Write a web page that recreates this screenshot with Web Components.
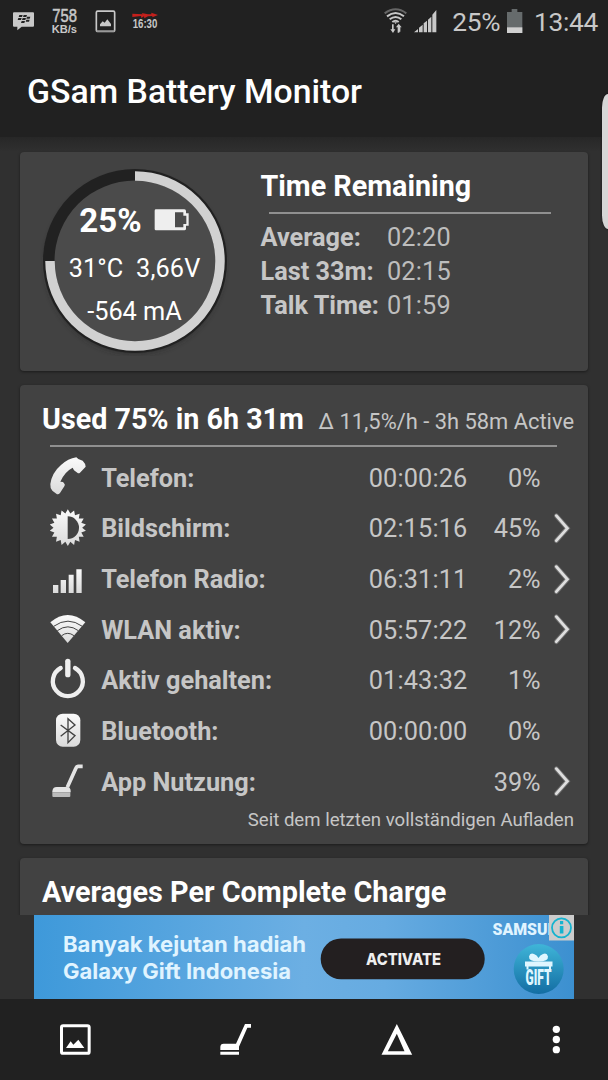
<!DOCTYPE html>
<html lang="de">
<head>
<meta charset="utf-8">
<title>GSam Battery Monitor</title>
<style>
html, body { margin: 0; height: 100%; }
body {
    background: #303030;
    color: #c6c6c6;
    font-family: Roboto, "Liberation Sans", sans-serif;
    overflow: hidden;
}
</style>
</head>
<body>
<battery-app></battery-app>

<script>
function define(name, html, setup) {
    const template = document.createElement('template');
    template.innerHTML = html;
    customElements.define(name, class extends HTMLElement {
        constructor() {
            super();
            this.attachShadow({mode: 'open'}).appendChild(template.content.cloneNode(true));
        }
        connectedCallback() {
            if (setup) setup(this, this.shadowRoot);
        }
    });
}

// name: [viewBox, markup]. All icons are drawn at 3 units per pixel.
const LIGHT = 'fill="#c8c8c8"';
const ICONS = {
    bbm: ['39 0 63 132', `<path ${LIGHT} d="M42 37h57q3 0 3 3v37q0 3-3 3H65L52 91V80H42q-3 0-3-3V40q0-3 3-3z"/>
        <path fill="#222" d="M58 45h10l-2 6H56zM71 45h10l-2 6H69zM55 54h10l-2 6H53zM68 54h10l-2 6H66zM81 50h10l-2 6H79zM65 63h10l-2 6H63zM79 59h10l-2 6H77z"/>`],
    speed: ['150 0 81 132', `<g ${LIGHT} font-family="Liberation Sans">
        <text x="154" y="67" font-size="53" textLength="74" lengthAdjust="spacingAndGlyphs" stroke="#c8c8c8" stroke-width="1.5">758</text>
        <text x="152" y="100" font-size="31" font-weight="bold" textLength="76" lengthAdjust="spacingAndGlyphs">KB/s</text></g>`],
    shot: ['281 0 60 132', `<rect x="285" y="33.500" width="55" height="61" rx="4" fill="none" stroke="#c8c8c8" stroke-width="5"/>
        <path fill="#c8c8c8" d="M296 79V73l8-9 6 4 8-10 11 14v7z"/><path fill="#999" d="M285 91h55v5h-55z"/>`],
    clock: ['395 0 82 132', `<path fill="#c4201c" d="M396 41l31 2 -3-4 19 4 10 0v-5l20 7-17 7v-4l-13 1-11 6-1-6-8 5-1-6-26 3z"/>
        <text x="397" y="83" ${LIGHT} font-family="Liberation Sans" font-size="40" font-weight="bold" textLength="74" lengthAdjust="spacingAndGlyphs">16:30</text>`],
    wifiUp: ['242 0 69 132', `<g fill="none" stroke="#c8c8c8" stroke-width="6"><path stroke="#666" d="M244 40q33-24 65 0"/>
        <path d="M251 49q26-20 51 0M259 58q18-14 35 0M267 66q10-8 19 0"/></g>
        <path ${LIGHT} d="M272 67h9l-4 5zM266 73h5v15h5l-7 11-8-11h5zM288 98h-5V82h-5l8-11 9 11h-4v13h-3z"/>`],
    signal: ['332 0 69 132', `<path ${LIGHT} d="M332 97l12-10v10zM347 97V83l11-9v23zM361 97V70l10-8v35zM374 97V59l10-9v47zM387 97V44l12-14v67z"/>`],
    battery: ['608 0 47 132', `<path fill="#666b6c" d="M608 36h14v-9h17v9h15v63h-46z"/><path fill="#d0d0d0" d="M608 82h46v17h-46z"/>`],
    charge: ['400 170 105 75', `<path fill="#eee" fill-rule="evenodd" d="M406 177h85q5 0 5 5v7h8v37h-8v9q0 5-5 5h-85q-4 0-4-4v-55q0-4 4-4zM463 186v45h25V221h9v-25h-9v-10z"/>`],
    phone: ['86 222 114 114', `<path fill="url(#g)" d="M174 222l13 5q9 9 9 18L179 263q-4 3-8 0l-10-7-4-8q-24 12-37 42l8 1 3 4q5 5 1 9l-13 20q-6 7-11 2l-12-9q-7-7-6-20 5-34 32-57 21-19 46-23z"/>`],
    screen: ['86 374 114 114', `<path fill="url(#g)" id="sun"/><path fill="#424242" d="M142 393a34 34 0 0 1 0 68z"/>`],
    radio: ['86 526 114 114', `<path fill="url(#g)" d="M98 598h16v24H98zM121 583h16v39H121zM145 567h15v55H145zM168 551h16v71H168z"/>`],
    wifi: ['86 33 114 114', `<path fill="url(#g)" d="M90 67q52-44 105 0l-53 62z"/>
        <path fill="none" stroke="#424242" stroke-width="3" d="M100 79q43-31 86 0M111 92q32-23 63 0M124 107q18-14 37 0"/>`],
    power: ['86 172 114 140', `<g fill="none" stroke="#eee" stroke-linecap="round" stroke-width="13"><path d="M121 202a45 45 0 1 0 43 0"/><path stroke-width="16" d="M142.500 182v40"/></g>`],
    bluetooth: ['86 337 114 114', `<rect x="107" y="339" width="73" height="99" rx="20" fill="url(#g)"/>
        <path fill="none" stroke="#424242" stroke-width="4" d="M121 373l43 32-21 21v-72l21 19-43 34"/>`],
    broom: ['86 489 114 114', `<path fill="none" stroke="#e4e4e4" stroke-width="11" stroke-linejoin="round" d="M187 499h-14q-4 0-6 5L141 562"/>
        <path fill="#e4e4e4" d="M96 574q1-13 13-13h30q12 0 12 12v4H96z"/><path fill="#bbb" d="M96 577h54v12q0 2-3 2H99q-3 0-3-3z"/>`],
    chevron: ['760 374 54 114', `<path fill="none" stroke="#909090" stroke-width="14" stroke-linecap="round" opacity=".6" d="M770 391l33 38-33 37"/><path fill="none" stroke="#dedede" stroke-width="8.500" stroke-linecap="round" d="M770 391l33 38-33 37"/>`],
    image: ['180 522 93 93', `<rect x="184.500" y="527" width="83" height="83" rx="5" fill="none" stroke="#fff" stroke-width="9"/><path fill="#fff" d="M198 594l14-20 8 10 15-15 18 25z"/>`],
    clean: ['661 522 93 93', `<path fill="#fff" d="M736 522h18v11h-11L718 590v10h-56v-9q0-10 10-10h37zM662 605h56v9h-56z"/>`],
    delta: ['243 522 93 93', `<path fill="#fff" fill-rule="evenodd" d="M290.500 522l46 92h-92zM290.500 551l-27 53h50z"/>`],
    more: ['723 522 93 93', `<g fill="#fff"><circle cx="769" cy="538" r="11"/><circle cx="769" cy="568.500" r="11"/><circle cx="769" cy="599" r="11"/></g>`],
};

// Outline of the sun: 18 teeth around (142.5, 427)
function sunPath() {
    const points = [];
    for (let i = 0; i < 36; i++) {
        const r = i % 2 ? 43 : 55;
        const a = Math.PI * i / 18 - Math.PI / 2;
        points.push((142.5 + r * Math.cos(a)).toFixed(1) + ' ' + (427 + r * Math.sin(a)).toFixed(1));
    }
    return 'M' + points.join('L') + 'z';
}

define('app-icon', `<style>
:host { display: block; flex: none; }
svg { display: block; overflow: visible; }
</style><span></span>`, (el, root) => {
    const [box, body] = ICONS[el.getAttribute('name')];
    const [, , w, h] = box.split(' ');
    root.querySelector('span').innerHTML = `<svg width="${w / 3}" height="${h / 3}" viewBox="${box}">
        <linearGradient id="g" x2="0" y2="1"><stop stop-color="#fafafa"/><stop offset="1" stop-color="#dadada"/></linearGradient>${body}</svg>`;
    const sun = root.querySelector('#sun');
    if (sun) sun.setAttribute('d', sunPath());
});

define('status-bar', `<style>
:host { display: flex; height: 44px; padding: 0 10px 0 13px; color: #c8c8c8; font-size: 26.3px; line-height: 45px; }
.left, .right { display: flex; }
.right { margin-left: auto; }
.left { gap: 17px; }
.signal { margin-left: 7px; }
.pct { width: 54px; margin-left: 15px; margin-right: 1px; letter-spacing: -.3px; }
.time { width: 64px; margin-left: 11px; text-align: right; letter-spacing: -.3px; }
</style>
<div class="left">
    <app-icon name="bbm"></app-icon><app-icon name="speed"></app-icon>
    <app-icon name="shot"></app-icon><app-icon name="clock"></app-icon>
</div>
<div class="right">
    <app-icon name="wifiUp"></app-icon><app-icon class="signal" name="signal"></app-icon>
    <span class="pct">25%</span><app-icon class="battery" name="battery"></app-icon><span class="time">13:44</span>
</div>`);

define('title-bar', `<style>
:host { display: block; height: 93px; padding-left: 27px; color: #fff; font-size: 33.8px; font-weight: 500; line-height: 96px; }
</style><slot></slot>`);

define('info-card', `<style>
:host { display: block; box-sizing: border-box; background: #424242; border-radius: 4px; box-shadow: 0 1px 3px rgba(0, 0, 0, .45); }
</style><slot></slot>`);

define('battery-gauge', `<style>
:host { display: grid; width: 190px; height: 190px; color: #fff; font-size: 25.3px; }
svg, .text { grid-area: 1 / 1; }
.text { display: flex; flex-direction: column; align-items: center; padding: 30px 1px 0 0; white-space: pre; }
.text div { height: 43px; line-height: 43px; }
.text .level { display: flex; align-items: center; gap: 12px; height: 50px; margin-right: 1px; font-size: 33px; font-weight: bold; line-height: 50px; }
.level app-icon { margin-top: -3px; }
.text .temp { margin-top: 1px; letter-spacing: .1px; }
</style>
<svg width="190" height="190" viewBox="-95 -95 190 190">
    <defs><filter id="s" x="-20%" y="-20%" width="140%" height="140%"><feGaussianBlur stdDeviation="2.500"/></filter></defs>
    <circle r="90" cy="3" fill="#222" opacity=".5" filter="url(#s)"/>
    <circle r="92" fill="#212121"/>
    <circle r="80.500" fill="#4b4b4b"/>
    <path d="M0-85A85 85 0 1 1-85 0" fill="none" stroke="#d1d1d1" stroke-width="9.500"/>
</svg>
<div class="text">
    <div class="level"><span>25%</span><app-icon name="charge"></app-icon></div>
    <div class="temp">31°C  3,66V</div>
    <div>-564 mA</div>
</div>`);

define('time-remaining', `<style>
:host { display: block; font-size: 25.3px; }
h2 { margin: 0; color: #fff; font-size: 28.7px; line-height: 36px; }
hr { width: 282px; height: 2px; margin: 8px 0 7px 8px; border: 0; background: #909090; }
dl { display: grid; grid-template-columns: 126.500px 1fr; margin: 0; line-height: 34px; white-space: nowrap; }
dt { font-weight: bold; }
dd { margin: 0; color: #bdbdbd; letter-spacing: .15px; }
</style>
<h2>Time Remaining</h2>
<hr>
<dl>
    <dt>Average:</dt><dd>02:20</dd>
    <dt>Last 33m:</dt><dd>02:15</dd>
    <dt>Talk Time:</dt><dd>01:59</dd>
</dl>`);

define('usage-row', `<style>
:host { display: flex; align-items: center; height: 50.67px; padding-left: 28.670px; font-size: 25.3px; white-space: nowrap; }
.label { margin-left: 14.500px; width: 267.500px; font-weight: bold; }
.time { width: 100px; letter-spacing: .15px; }
.pct { width: 72px; text-align: right; }
.more { margin-left: 12px; }
</style>
<span class="icon"></span>
<span class="label"><slot></slot></span>
<span class="time"></span>
<span class="pct"></span>`, (el, root) => {
    root.querySelector('.icon').innerHTML = `<app-icon name="${el.getAttribute('icon')}"></app-icon>`;
    root.querySelector('.time').textContent = el.getAttribute('time') || '';
    root.querySelector('.pct').textContent = el.getAttribute('pct');
    if (el.hasAttribute('more')) {
        root.querySelector('.pct').insertAdjacentHTML('afterend', '<app-icon class="more" name="chevron"></app-icon>');
    }
});

define('usage-list', `<style>
:host { display: block; }
header { display: flex; align-items: baseline; justify-content: space-between; height: 60px; padding: 0 14px 0 22px; line-height: 69px; white-space: nowrap; }
h2 { margin: 0; color: #fff; font-size: 28.7px; }
.rate { font-size: 21.9px; }
hr { width: 507px; height: 2px; margin: 0 0 6px 30px; border: 0; background: #909090; }
footer { padding-right: 14px; text-align: right; font-size: 18.6px; line-height: 24px; }
</style>
<header><h2>Used 75% in 6h 31m</h2><span class="rate">Δ 11,5%/h - 3h 58m Active</span></header>
<hr>
<usage-row icon="phone" time="00:00:26" pct="0%">Telefon:</usage-row>
<usage-row icon="screen" time="02:15:16" pct="45%" more>Bildschirm:</usage-row>
<usage-row icon="radio" time="06:31:11" pct="2%" more>Telefon Radio:</usage-row>
<usage-row icon="wifi" time="05:57:22" pct="12%" more>WLAN aktiv:</usage-row>
<usage-row icon="power" time="01:43:32" pct="1%">Aktiv gehalten:</usage-row>
<usage-row icon="bluetooth" time="00:00:00" pct="0%">Bluetooth:</usage-row>
<usage-row icon="broom" pct="39%" more>App Nutzung:</usage-row>
<footer>Seit dem letzten vollständigen Aufladen</footer>`);

define('ad-banner', `<style>
:host { display: block; width: 540px; height: 84.500px; margin-left: 34px; }
svg { display: block; }
</style>
<svg width="540" height="84.500" viewBox="34 914.500 540 84.500">
    <linearGradient id="bg"><stop stop-color="#3e99da"/><stop offset=".5" stop-color="#6cafe3"/><stop offset=".65" stop-color="#66abe1"/><stop offset="1" stop-color="#3c90d0"/></linearGradient>
    <linearGradient id="ball" x2="0" y2="1"><stop stop-color="#3fb5d8"/><stop offset="1" stop-color="#136da3"/></linearGradient>
    <rect x="34" y="914" width="540" height="86" fill="url(#bg)"/>
    <g fill="#e0f4ff" font-family="Inter" font-weight="700" font-size="21.500">
        <text x="63" y="951.300" textLength="243" lengthAdjust="spacingAndGlyphs">Banyak kejutan hadiah</text>
        <text x="63" y="978.700" textLength="228" lengthAdjust="spacingAndGlyphs">Galaxy Gift Indonesia</text>
    </g>
    <rect x="320.700" y="938" width="164" height="40.700" rx="20.300" fill="#231f20"/>
    <text x="366" y="964" textLength="75" lengthAdjust="spacingAndGlyphs" fill="#eee" font-family="Inter" font-weight="800" font-size="16.500">ACTIVATE</text>
    <text x="492.500" y="934.700" textLength="77" fill="#e0f4ff" font-family="Roboto" font-weight="900" font-size="15.800" lengthAdjust="spacingAndGlyphs">SAMSUNG</text>
    <circle cx="538.700" cy="968.500" r="25" fill="url(#ball)"/>
    <g fill="#dff6ff">
        <path d="M525 961h27.500v5H525zM526.500 966h2v3h-2zM549 966h2v3h-2z"/>
        <path d="M538.500 961q-10 0-9.500-5 1-4 5-2.500 3 1 4.500 4 1.500-3 4.500-4 4-1.500 5 2.500 .5 5-9.500 5z"/>
        <text x="525.500" y="984" textLength="26" lengthAdjust="spacingAndGlyphs" font-family="Roboto" font-weight="900" font-size="22">GIFT</text>
    </g>
    <rect x="549" y="914.500" width="25" height="25.500" fill="#ccc"/>
    <circle cx="561.500" cy="927.300" r="9.500" fill="none" stroke="#15b3cf" stroke-width="1.800"/>
    <path fill="#15b3cf" d="M560 920.500h3.200v3.200H560zM559.800 925.500h3.600v7.500h-3.600z"/>
</svg>`);

define('nav-bar', `<style>
:host { display: flex; align-items: center; justify-content: space-between; height: 81px; padding: 0 36px 0 60px; background: #212121; }
</style>
<app-icon name="image"></app-icon><app-icon name="clean"></app-icon>
<app-icon name="delta"></app-icon><app-icon name="more"></app-icon>`);

define('edge-handle', `<style>
:host { position: absolute; right: 0; top: 94px; width: 6.500px; height: 135px; background: #d6d6d6; border-radius: 8px 0 0 8px / 18px 0 0 18px; box-shadow: 0 0 2px #111; }
</style>`);

define('battery-app', `<style>
:host { display: flex; flex-direction: column; width: 608px; height: 1080px; position: relative; overflow: hidden; }
.top { flex: none; background: #212121; }
main {
    flex: none; display: flex; flex-direction: column; gap: 14px; box-sizing: border-box;
    height: 777.500px; padding: 15px 20px 0; overflow: hidden;
    background: linear-gradient(#272727, #303030 15px);
}
info-card { flex: none; }
.summary { display: flex; box-sizing: border-box; height: 219px; padding-top: 14px; }
battery-gauge { margin-left: 20px; }
time-remaining { margin: 2px 0 0 30.500px; }
.usage { height: 459px; }
.averages { height: 120px; }
.averages h2 { margin: 0; padding-left: 22px; color: #fff; font-size: 28.8px; line-height: 69px; }
</style>
<div class="top">
    <status-bar></status-bar>
    <title-bar>GSam Battery Monitor</title-bar>
</div>
<main>
    <info-card><div class="summary">
        <battery-gauge></battery-gauge>
        <time-remaining></time-remaining>
    </div></info-card>
    <info-card class="usage"><usage-list></usage-list></info-card>
    <info-card class="averages"><h2>Averages Per Complete Charge</h2></info-card>
</main>
<ad-banner></ad-banner>
<nav-bar></nav-bar>
<edge-handle></edge-handle>`);
</script>
</body>
</html>
